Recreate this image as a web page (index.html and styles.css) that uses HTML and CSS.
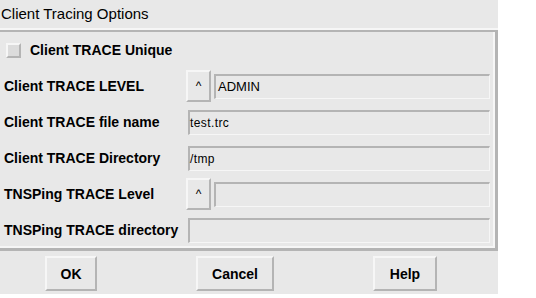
FILE: index.html
```html
<!DOCTYPE html>
<html lang="en">
<head>
  <meta charset="UTF-8">
  <title>Client Tracing Options</title>
  <link rel="stylesheet" href="styles.css">
</head>
<body>
  <div class="dialog">
    <div class="title">Client Tracing Options</div>

    <div class="frame">
      <label class="check-row">
        <span class="checkbox"></span>
        <span>Client TRACE Unique</span>
      </label>

      <div class="label">Client TRACE LEVEL</div>
      <div class="combo">
        <button class="arrow" type="button">^</button>
        <div class="field">ADMIN</div>
      </div>

      <div class="label">Client TRACE file name</div>
      <div class="field plain small">test.trc</div>

      <div class="label">Client TRACE Directory</div>
      <div class="field plain small">/tmp</div>

      <div class="label">TNSPing TRACE Level</div>
      <div class="combo">
        <button class="arrow" type="button">^</button>
        <div class="field"></div>
      </div>

      <div class="label">TNSPing TRACE directory</div>
      <div class="field plain"></div>
    </div>

    <div class="buttons">
      <button class="btn ok" type="button">OK</button>
      <button class="btn cancel" type="button">Cancel</button>
      <button class="btn help" type="button">Help</button>
    </div>
  </div>
</body>
</html>
```

FILE: styles.css
```css
body {
  margin: 0;
  padding: 0;
  background: #ffffff;
  font-family: "Liberation Sans", Arial, sans-serif;
  color: #000000;
}
.dialog {
  width: 498px;
  height: 294px;
  background: #e8e8e8;
}
.title {
  height: 28px;
  line-height: 28px;
  padding-left: 1px;
  font-size: 15px;
  border-bottom: 2px solid #f6f6f6;
}
.frame {
  display: grid;
  grid-template-columns: 182px 1fr;
  grid-auto-rows: 36px;
  align-items: center;
  height: 216px;
  padding: 0 5px 0 4px;
  border-top: 2px solid #b4b4b4;
  border-right: 3px solid #b4b4b4;
  border-bottom: 3px solid #b4b4b4;
  box-shadow: inset -2px -2px 0 #f6f6f6;
}
.check-row {
  grid-column: 1 / 3;
  display: flex;
  align-items: center;
  gap: 9px;
  padding-left: 2px;
  font-size: 14px;
  font-weight: bold;
}
.checkbox {
  width: 11px;
  height: 11px;
  background: #dcdcdc;
  border-top: 2px solid #f6f6f6;
  border-left: 2px solid #f6f6f6;
  border-right: 2px solid #b4b4b4;
  border-bottom: 2px solid #b4b4b4;
}
.label {
  font-size: 14px;
  font-weight: bold;
  white-space: nowrap;
}
.combo {
  display: flex;
  align-items: center;
  gap: 3px;
}
.arrow {
  width: 25px;
  height: 32px;
  padding: 0;
  background: #e8e8e8;
  border-top: 2px solid #f6f6f6;
  border-left: 2px solid #f6f6f6;
  border-right: 2px solid #b4b4b4;
  border-bottom: 2px solid #b4b4b4;
  font-family: "Liberation Sans", Arial, sans-serif;
  font-size: 12px;
}
.field {
  flex: 1;
  height: 25px;
  box-sizing: border-box;
  line-height: 22px;
  padding-left: 2px;
  font-size: 13px;
  border-top: 2px solid #b4b4b4;
  border-left: 2px solid #b4b4b4;
  border-right: 1px solid #f6f6f6;
  border-bottom: 1px solid #f6f6f6;
}
.plain {
  margin-left: 2px;
}
.small {
  padding-left: 0;
  font-size: 12px;
  letter-spacing: 0.4px;
}
.buttons {
  display: flex;
  gap: 99px;
  padding: 5px 0 0 45px;
}
.btn {
  height: 35px;
  padding: 0;
  background: #e8e8e8;
  border-top: 2px solid #f6f6f6;
  border-left: 2px solid #f6f6f6;
  border-right: 2px solid #b4b4b4;
  border-bottom: 2px solid #b4b4b4;
  font-family: "Liberation Sans", Arial, sans-serif;
  font-size: 14px;
  font-weight: bold;
}
.ok {
  width: 52px;
}
.cancel {
  width: 78px;
}
.help {
  width: 64px;
}
```
